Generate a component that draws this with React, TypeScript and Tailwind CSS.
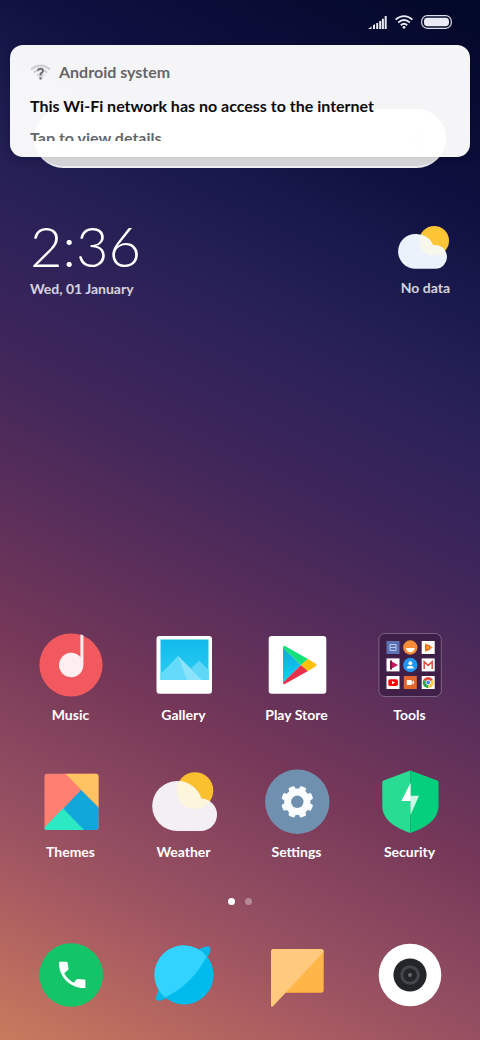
import { useState } from 'react'
import type { ReactNode } from 'react'

type AppItem = { name: string; icon: ReactNode }

function Icon({ children }: { children: ReactNode }) {
  return <svg viewBox="0 0 64 64" className="w-16 h-16 overflow-visible" aria-hidden="true">{children}</svg>
}

const music = (
  <Icon>
    <circle cx="32" cy="32" r="31.6" fill="#f1595f" />
    <path d="M44.4 2.6V32A12.2 12.2 0 1 1 41.4 24V1.6Q43 1.8 44.4 2.6Z" fill="#fdeef0" />
  </Icon>
)

const gallery = (
  <Icon>
    <defs>
      <linearGradient id="sky" x1="0" y1="0" x2="0" y2="1">
        <stop offset="0" stopColor="#12b9ea" /><stop offset="1" stopColor="#2bcdf3" />
      </linearGradient>
    </defs>
    <rect x="4.5" y="3" width="55.5" height="57.7" rx="3" fill="#fff" />
    <rect x="8.5" y="6.5" width="48" height="40.5" fill="url(#sky)" />
    <path d="M36 37 47 27.7 56.5 37V47H36Z" fill="#45cdf5" />
    <path d="M8.5 41 26 23 50 47H8.5Z" fill="#64dbfb" />
    <path d="M26 23 50 47H35Z" fill="#8ce4fa" />
    <path d="M39.5 36.5 47 27.7 56.5 37V47H50Z" fill="#5fd7f8" />
  </Icon>
)

const playStore = (
  <Icon>
    <defs>
      <linearGradient id="play" x1="0" y1="0" x2="0" y2="1">
        <stop offset="0" stopColor="#16a6dd" /><stop offset="1" stopColor="#08d3fb" />
      </linearGradient>
    </defs>
    <rect x="3.7" y="3" width="57.6" height="57.7" rx="3" fill="#fff" />
    <path d="M18 14.5V49.5L36 31.9Z" fill="url(#play)" />
    <path d="M18 14.5Q18 12 20.3 13.2L43 26 36 31.9Z" fill="#12e078" />
    <path d="M18 49.5Q18 52 20.3 50.8L43 38 36 31.9Z" fill="#e8304a" />
    <path d="M43 26 50.5 30.5Q52.6 32 50.5 33.4L43 38 36 31.9Z" fill="#fdc108" />
  </Icon>
)

const tools = (
  <Icon>
    <rect x=".9" y=".5" width="62.4" height="63" rx="6" fill="#34183f" fillOpacity=".65" stroke="#fff" strokeOpacity=".28" />
    <rect x="8.5" y="8" width="13" height="13" fill="#5b73b3" />
    <path d="M12 11.5H18V17.5H12ZM12 14.5H18" fill="none" stroke="#b9c8ea" strokeWidth="1" />
    <circle cx="32.3" cy="14.5" r="7.2" fill="#f68c35" />
    <path d="M28 15H36.6A4.3 4.3 0 0 1 28 15Z" fill="#fff" />
    <rect x="43.7" y="8" width="13" height="13" fill="#fff" />
    <path d="M47 10 55 14.6 47 19Z" fill="#f9a01b" />
    <circle cx="49.6" cy="14.6" r="2.3" fill="none" stroke="#e9572b" strokeWidth="1.1" />
    <rect x="8.5" y="25.4" width="13" height="13" fill="#fff" />
    <path d="M12 27.5 20 32 12 36.5Z" fill="#c2185b" /><path d="M12 27.5H14V36.5H12Z" fill="#8e1145" />
    <circle cx="32.3" cy="32" r="7.2" fill="#2196f3" />
    <circle cx="32.3" cy="30.2" r="1.9" fill="#fff" /><path d="M28.9 35.4Q28.9 32.8 32.3 32.7 35.7 32.8 35.7 35.4Z" fill="#fff" />
    <rect x="43.7" y="25.4" width="13" height="13" fill="#fff" />
    <path d="M46.2 36V28.8L50.2 32.4 54.2 28.8V36" fill="none" stroke="#dd4b3e" strokeWidth="1.5" />
    <rect x="8.5" y="43" width="13" height="13" fill="#fff" />
    <rect x="10.3" y="46.2" width="9.6" height="6.8" rx="1.8" fill="#f00" /><path d="M14 47.9 17 49.6 14 51.3Z" fill="#fff" />
    <rect x="25.8" y="43" width="13" height="13" fill="#e4672f" />
    <rect x="28.8" y="47" width="5" height="5" rx=".7" fill="#fff" /><path d="M33.6 49.5 36 47.4V51.6Z" fill="#fff" />
    <rect x="43.7" y="43" width="13" height="13" fill="#fff" />
    <path d="M50.2 49.5 45.4 46.8A5.5 5.5 0 0 1 55 46.8Z" fill="#df4a3c" />
    <path d="M50.2 49.5 55 46.8A5.5 5.5 0 0 1 50.2 55Z" fill="#fdcf3e" />
    <path d="M50.2 49.5V55A5.5 5.5 0 0 1 45.4 46.8Z" fill="#2ba24c" />
    <circle cx="50.2" cy="49.5" r="2.3" fill="#4285f4" stroke="#fff" strokeWidth=".8" />
  </Icon>
)

const themes = (
  <Icon>
    <clipPath id="tile"><rect x="5.5" y="3.7" width="54" height="56.3" rx="2.5" /></clipPath>
    <g clipPath="url(#tile)">
      <rect x="5" y="3" width="55" height="58" fill="#ff7f70" />
      <path d="M26 3.2H60V38Z" fill="#ffc361" />
      <path d="M42 20 60 38V61H3Z" fill="#12a7da" />
      <path d="M42 20 5 57.8V61L24 38.3Z" fill="#ff7f70" />
      <path d="M24 38.3 46 61H2Z" fill="#2be9c2" />
    </g>
  </Icon>
)

const weather = (
  <Icon>
    <circle cx="43" cy="20.5" r="18.3" fill="#fbc02e" />
    <clipPath id="sun"><circle cx="43" cy="20.5" r="18.3" /></clipPath>
    <path d="M25.2 11A25 25 0 1 0 25.2 61H48.2A16.3 16.3 0 1 0 49.2 28.4 25 25 0 0 0 25.2 11Z" fill="#f3eff3" />
    <path d="M25.2 11A25 25 0 1 0 25.2 61H48.2A16.3 16.3 0 1 0 49.2 28.4 25 25 0 0 0 25.2 11Z" fill="#fdf6dd" clipPath="url(#sun)" />
  </Icon>
)

const settings = (
  <Icon>
    <circle cx="32.3" cy="31.8" r="32.2" fill="#7090b0" />
    <g transform="translate(32.3 31.8)">
      {[22.5, 67.5, 112.5, 157.5].map(a => (
        <rect key={a} x="-3.4" y="-16" width="6.8" height="32" rx="1.6" fill="#fafdff" transform={`rotate(${a})`} />
      ))}
      <circle r="13.2" fill="#fafdff" />
      <circle r="6.2" fill="#7090b0" />
    </g>
  </Icon>
)

const security = (
  <Icon>
    <path d="M32.3.5 5.5 10.6Q4.3 11 4.3 12.4V36C4.3 50 18 58 32.3 63Z" fill="#29dc94" />
    <path d="M32.3.5 59.3 10.6Q60.5 11 60.5 12.4V36C60.5 50 46.8 58 32.3 63Z" fill="#05cf7c" />
    <path d="M32.3 13.5 23.3 31H32.3Z" fill="#fff" />
    <path d="M32.3 25.7H41L32.5 45Z" fill="#c9f8e4" />
    <path d="M32.3 13.5V31" stroke="#fff" strokeWidth=".6" />
  </Icon>
)

const phone = (
  <Icon>
    <circle cx="32.2" cy="32" r="31.8" fill="#14c469" />
    <path transform="translate(15.6 14.4) scale(1.46)" d="M6.6 10.8c1.4 2.8 3.8 5.1 6.6 6.6l1.6-2.1c.3-.4.7-.6 1.2-.5l4.3.4q.8.1.8.8V21h-1C10.6 21 3 13.4 3 4V3h5.2q.6 0 .7.7l.6 4q.1.6-.4 1Z" fill="#fff" />
  </Icon>
)

const browser = (
  <Icon>
    <ellipse cx="31.2" cy="30.6" rx="37.5" ry="9" fill="#08b7ea" transform="rotate(-45 31.2 30.6)" />
    <circle cx="32.2" cy="32" r="29.4" fill="#00bbec" />
    <path d="M54.5 13.2A29.4 29.4 0 1 0 12.7 54.2C29 48 47 30 54.5 13.2Z" fill="#32d3ff" />
  </Icon>
)

const messages = (
  <Icon>
    <path d="M9 6H56Q58.7 6 58.7 8.7V47Q58.7 49.8 56 49.8H20.5L8 63Q6 64.6 6 62V9Q6 6 9 6Z" fill="#ffb547" />
    <path d="M9 6H56Q58.5 6 58.7 8.7L20.5 49.8 8 63Q6 64.6 6 62V9Q6 6 9 6Z" fill="#ffca7e" />
  </Icon>
)

const camera = (
  <Icon>
    <circle cx="32" cy="32" r="31.3" fill="#fff" />
    <circle cx="32" cy="32" r="16.6" fill="#222628" />
    <circle cx="32" cy="32" r="8.3" fill="#222427" stroke="#43464b" strokeWidth="3" />
    <circle cx="32" cy="32" r="2" fill="#66696c" />
  </Icon>
)

const apps: AppItem[] = [
  { name: 'Music', icon: music },
  { name: 'Gallery', icon: gallery },
  { name: 'Play Store', icon: playStore },
  { name: 'Tools', icon: tools },
  { name: 'Themes', icon: themes },
  { name: 'Weather', icon: weather },
  { name: 'Settings', icon: settings },
  { name: 'Security', icon: security },
]

const dock: AppItem[] = [
  { name: 'Phone', icon: phone },
  { name: 'Browser', icon: browser },
  { name: 'Messages', icon: messages },
  { name: 'Camera', icon: camera },
]

function StatusBar() {
  return (
    <header className="flex h-11 items-center justify-end gap-2 pr-7">
      <svg viewBox="0 0 19 13" className="h-[13px] w-[19px]" fill="#e9eaf2" aria-hidden="true">
        <path d="M0 13 3.5 10.5V13ZM5 9.2 7 8V13H5ZM8.2 7H10.2V13H8.2ZM11.2 5H13.2V13H11.2ZM13.9 2.8H15.9V13H13.9ZM16.7 0H18.7V13H16.7Z" />
      </svg>
      <svg viewBox="0 0 18 14" className="h-[14px] w-[18px]" fill="none" stroke="#e9eaf2" strokeWidth="1.8" aria-hidden="true">
        <path d="M.6 4.6Q9-2.4 17.4 4.6M3.2 7.5Q9 2.6 14.8 7.5M5.8 10.2Q9 7.4 12.2 10.2" />
        <circle cx="9" cy="12.3" r="1.4" fill="#e9eaf2" stroke="none" />
      </svg>
      <svg viewBox="0 0 31 14" className="h-[14px] w-[31px]" aria-hidden="true">
        <rect x=".7" y=".7" width="29.6" height="12.6" rx="5.6" fill="none" stroke="#dfe0ea" strokeWidth="1.2" />
        <rect x="3" y="2.8" width="25" height="8.4" rx="3.4" fill="#e9eaf2" />
      </svg>
    </header>
  )
}

function Notification() {
  return (
    <section className="absolute inset-x-[10px] top-px h-28 rounded-[13px] bg-white/96 px-5 py-4 shadow-[0_2px_8px_rgba(0,0,0,0.2)]">
      <div className="flex h-full flex-col overflow-hidden">
        <div className="flex h-[22px] shrink-0 items-center gap-2">
          <svg viewBox="0 0 21 17" className="h-[17px] w-[21px]" fill="none" aria-hidden="true">
            <path d="M1 5.5Q10.5-2.2 20 5.5M3.8 8.4Q10.5 2.8 17.2 8.4" stroke="#cfcfd1" strokeWidth="2" />
            <path d="M6 10.6 10.5 15.5 15 10.6Q10.5 7.4 6 10.6Z" fill="#d8d8da" />
            <path d="M8 6.8Q8 4.6 10.5 4.6T13 6.8Q13 8.4 10.6 9.6V11.6" stroke="#6a6a6c" strokeWidth="1.8" />
            <circle cx="10.6" cy="14.4" r="1.2" fill="#6a6a6c" />
          </svg>
          <span className="text-base font-bold text-[#666668]">Android system</span>
        </div>
        <p className="mt-3 shrink-0 text-base leading-[22px] font-bold whitespace-nowrap text-[#0c0c0c]">
          This Wi-Fi network has no access to the internet
        </p>
        <p className="mt-[10px] shrink-0 text-base leading-[22px] font-bold text-[#666668]">Tap to view details</p>
      </div>
    </section>
  )
}

function SearchBar() {
  return (
    <button aria-label="Search" className="mx-[34px] mt-[65px] flex h-[59px] items-center justify-between rounded-full border-b-2 border-[#ededf0] bg-linear-to-b from-white from-75% to-[#d2d2d8] px-5">
      <svg viewBox="0 0 20 20" className="h-5 w-5" fill="none" strokeWidth="3.5" aria-hidden="true">
        <path d="M17 5A8 8 0 0 0 3 6" stroke="#f8c7c2" /><path d="M3 6A8 8 0 0 0 3 14" stroke="#fae6b8" />
        <path d="M3 14A8 8 0 0 0 15 16" stroke="#c2e6cb" /><path d="M15 16Q18 14 18 10H10" stroke="#c5d8fa" />
      </svg>
      <svg viewBox="0 0 16 26" className="h-[26px] w-4" fill="none" strokeWidth="2.5" aria-hidden="true">
        <rect x="5" y="1" width="6" height="14" rx="3" fill="#c5d8fa" />
        <path d="M1.5 12A6.5 6.5 0 0 0 14.5 12M8 19V25" stroke="#f8c7c2" />
      </svg>
    </button>
  )
}

function AppButton({ app, showName }: { app: AppItem; showName?: boolean }) {
  return (
    <button aria-label={app.name} className="flex flex-col items-center gap-2">
      {app.icon}
      {showName && <span className="text-sm leading-5 font-bold whitespace-nowrap text-white">{app.name}</span>}
    </button>
  )
}

export default function App() {
  const [page, setPage] = useState(0)

  return (
    <main className="flex min-h-screen flex-col bg-[linear-gradient(26deg,#c97b5d_0%,#aa5c61_12%,#954f61_19%,#763859_32%,#5c2f5a_42%,#48295a_50%,#38245a_58%,#2c2258_65%,#211e52_71%,#18184a_77%,#0f1040_83%,#020828_100%)] font-[Lato,sans-serif]">
      <StatusBar />

      <div className="relative flex flex-col">
        <SearchBar />
        <Notification />
      </div>

      {/* Clock and weather */}
      <div className="flex items-start justify-between px-[30px] pt-12">
        <div>
          <time className="block text-[56px] leading-[60px] font-light text-white">2:36</time>
          <p className="mt-[3px] text-sm leading-5 font-bold text-white/80">Wed, 01 January</p>
        </div>
        <div className="flex flex-col items-end pt-[10px]">
          <svg viewBox="0 0 52 43" className="h-[43px] w-[52px]" aria-hidden="true">
            <clipPath id="smallSun"><circle cx="36.2" cy="14.8" r="14.8" /></clipPath>
            <circle cx="36.2" cy="14.8" r="14.8" fill="#fdc435" />
            <path d="M17.5 8A17.4 17.4 0 1 0 17.5 42.8H37.2A11.8 11.8 0 1 0 35 19.4 17.8 17.8 0 0 0 17.5 8Z" fill="#ebf2fb" />
            <path d="M17.5 8A17.4 17.4 0 1 0 17.5 42.8H37.2A11.8 11.8 0 1 0 35 19.4 17.8 17.8 0 0 0 17.5 8Z" fill="#f8f7ec" clipPath="url(#smallSun)" />
          </svg>
          <p className="mt-[9px] text-sm leading-5 font-bold text-white/80">No data</p>
        </div>
      </div>

      {/* App grid */}
      <div className="mt-auto grid grid-cols-4 gap-y-[45px] px-[14px]">
        {apps.map(app => <AppButton key={app.name} app={app} showName />)}
      </div>

      <div className="flex justify-center gap-[10px] pt-9 pb-[38px]">
        {[0, 1].map(i => (
          <button
            key={i}
            aria-label={`Page ${i + 1}`}
            onClick={() => setPage(i)}
            className={`h-[7px] w-[7px] rounded-full ${page === i ? 'bg-white' : 'bg-white/35'}`}
          />
        ))}
      </div>

      <nav className="grid grid-cols-4 px-[14px] pb-[33px]">
        {dock.map(app => <AppButton key={app.name} app={app} />)}
      </nav>
    </main>
  )
}
